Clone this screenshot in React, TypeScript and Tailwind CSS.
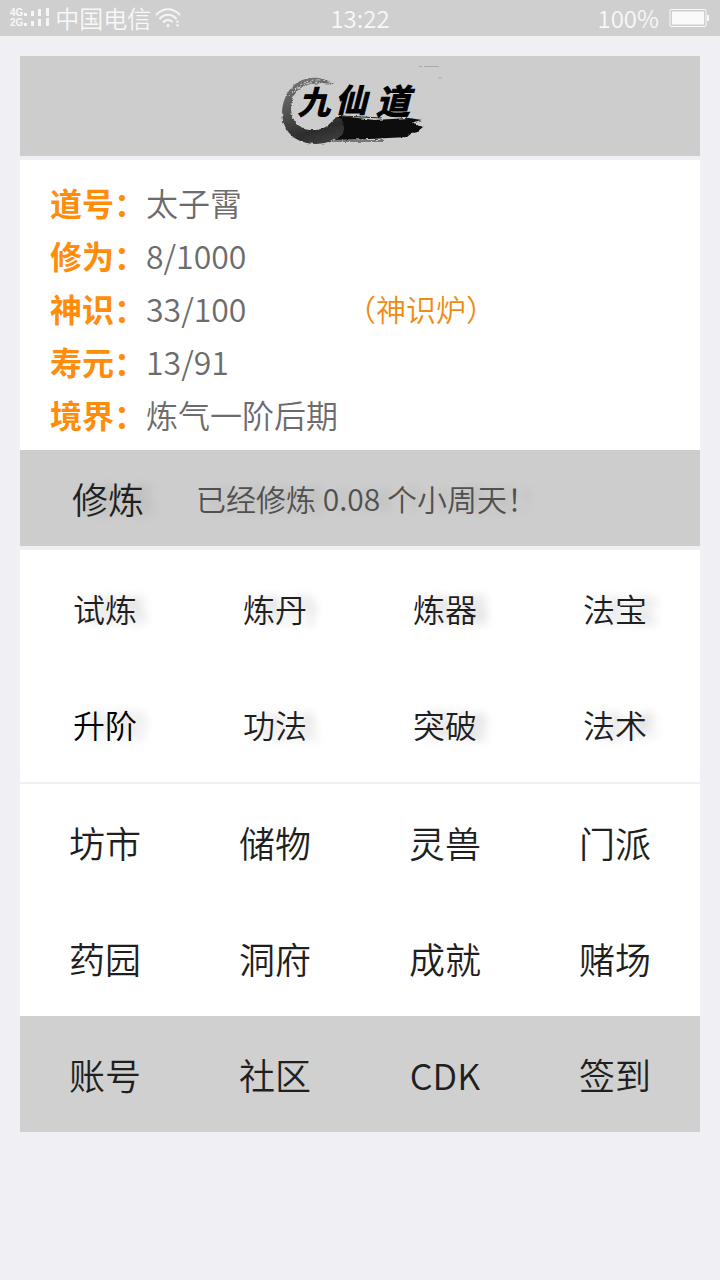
import React from 'react';

const stats = [
  { label: '道号', value: '太子霄' },
  { label: '修为', value: '8/1000' },
  { label: '神识', value: '33/100', link: '（神识炉）' },
  { label: '寿元', value: '13/91' },
  { label: '境界', value: '炼气一阶后期' },
];

const skills = ['试炼', '炼丹', '炼器', '法宝', '升阶', '功法', '突破', '法术'];
const places = ['坊市', '储物', '灵兽', '门派', '药园', '洞府', '成就', '赌场'];
const footer = ['账号', '社区', 'CDK', '签到'];

function Signal() {
  return (
    <svg width="28" height="20" viewBox="0 0 28 20" fill="#f6f6f6" aria-hidden="true">
      {[0, 10].map((y) => (
        <g key={y}>
          <rect x="1" y={y + 5} width="3" height="3" />
          <rect x="8" y={y + 3} width="3" height="5" />
          <rect x="15" y={y + 1} width="3" height="7" />
          <rect x="23" y={y} width="3" height="8" />
        </g>
      ))}
    </svg>
  );
}

function Wifi() {
  return (
    <svg width="26" height="20" viewBox="0 0 26 20" fill="none" stroke="#f6f6f6" strokeWidth="2" strokeLinecap="round" aria-hidden="true">
      <path d="M1.5 6.5C8 -0.5 18 -0.5 24.5 6.5" />
      <path d="M5 10.5C9.500 5.500 16.500 5.500 21 10.500" />
      <path d="M8.500 14C11 11.500 15 11.500 17 13.500" />
      <circle cx="13" cy="17.500" r="1.500" fill="#f6f6f6" stroke="none" />
      <path d="M20.500 14.500l2-2.500 2 2.500zM20.500 16.500l2 2.500 2-2.500z" fill="#f6f6f6" stroke="none" />
    </svg>
  );
}

function StatusBar() {
  return (
    <div className="grid h-9 grid-cols-3 items-center bg-[#cfcfcf] px-2.5 text-2xl leading-9 font-[350] text-[#f8f8f8]">
      <div className="flex items-center">
        <div className="font-['Liberation_Sans',sans-serif] text-[10px] leading-[10px] font-bold">
          <div>4G</div>
          <div>2G</div>
        </div>
        <Signal />
        <span className="mx-1">中国电信</span>
        <Wifi />
      </div>
      <div className="text-center">13:22</div>
      <div className="flex items-center justify-end gap-2.5">
        <span>100%</span>
        <svg width="41" height="18" viewBox="0 0 41 18" aria-hidden="true">
          <rect x="1" y="0.500" width="36" height="17" rx="1" fill="none" stroke="#f8f8f8" />
          <rect x="3" y="2.500" width="32" height="13" fill="#fafafa" />
          <rect x="38" y="6" width="2" height="6" fill="#f8f8f8" />
        </svg>
      </div>
    </div>
  );
}

function Logo() {
  return (
    <svg width="180" height="100" viewBox="0 0 180 100" role="img" aria-label="九仙道">
      <defs>
        <linearGradient id="ink" x1="0.3" y1="0" x2="0.6" y2="1">
          <stop offset="0" stopColor="#757575" />
          <stop offset="0.5" stopColor="#4c4c4c" />
          <stop offset="0.8" stopColor="#2c2c2c" />
          <stop offset="1" stopColor="#3c3c3c" />
        </linearGradient>
        <filter id="brush" x="-5%" y="-10%" width="110%" height="120%">
          <feTurbulence type="fractalNoise" baseFrequency="0.2 0.4" numOctaves="3" seed="4" />
          <feDisplacementMap in="SourceGraphic" scale="3" xChannelSelector="R" yChannelSelector="G" />
        </filter>
      </defs>
      <g filter="url(#brush)">
        <path fill="#090d09" d="M66 62L72 60L104 64L139 62L152 64L143 66L146 69L153 71L147 76L142 77L137 81L100 83L64 84L70 73Z" />
        <path fill="none" stroke="#222" strokeWidth="1" d="M72 60L112 62M62 85L113 85" />
        <path fill="url(#ink)" d="M64 28C52 19 32 19 21 32C9 47 9 68 22 80C34 90 54 90 64 83C70 82 74 79 74 72C74 65 71 61 66 61C61 66 57 73 46 74C31 75 21 66 21 52C21 40 28 30 41 28C50 27 57 27 64 28Z" />
        <path fill="none" stroke="#cdcdcd" strokeWidth="1" strokeDasharray="5 2 2 3" d="M62 27C46 20 29 25 19 40M54 28C42 24 31 28 22 38" />
      </g>
      <g fill="#000" stroke="#000" strokeWidth="1" fontWeight="700" fontStyle="italic" fontFamily='"Noto Sans CJK SC", sans-serif'>
        <text x="28" y="58" fontSize="32">九</text>
        <text x="65" y="56" fontSize="32">仙</text>
        <text x="106" y="58" fontSize="34">道</text>
      </g>
      <path stroke="#aaa" strokeWidth="1" d="M149 10.500h3M154 10.500h15M168 22h4" />
    </svg>
  );
}

function App() {
  return (
    <div className="min-h-screen bg-[#efeff4] font-['Noto_Sans_CJK_SC',sans-serif] font-[350] text-[#1f1f1f]">
      <StatusBar />
      <main className="px-5 py-5">
        <header className="mb-1 flex h-25 justify-center bg-[#cdcdcd]">
          <Logo />
        </header>

        {/* Character info */}
        <dl className="bg-white px-[30px] pt-4 pb-[9px] text-[32px] leading-[53px]">
          {stats.map((s) => (
            <div key={s.label} className="flex">
              <dt className="w-24 whitespace-nowrap font-bold text-[#ff8c0a]">{s.label}：</dt>
              <dd className="flex flex-1 text-[#6c6c6c]">
                <span className={s.link ? 'w-[200px]' : ''}>{s.value}</span>
                {s.link && (
                  <a href="#lu" className="text-[30px] text-[#ef8c14]">{s.link}</a>
                )}
              </dd>
            </div>
          ))}
        </dl>

        {/* Training progress */}
        <div className="mb-1 flex h-24 items-center gap-[52px] bg-[#cdcdcd] pl-[52px]">
          <button className="text-4xl text-shadow-[12px_0_10px_rgb(0_0_0/0.12)]">修炼</button>
          <p className="text-[30px] text-[#505050] text-shadow-[12px_0_10px_rgb(0_0_0/0.1)]">已经修炼 0.08 个小周天！</p>
        </div>

        <nav className="mb-0.5 grid grid-cols-4 bg-white">
          {skills.map((name) => (
            <button
              key={name}
              className={`h-29 text-[32px] text-shadow-[12px_0_10px_rgb(0_0_0/0.2)] ${name === '升阶' ? 'text-black' : ''}`}
            >
              {name}
            </button>
          ))}
        </nav>

        <nav className="grid grid-cols-4 bg-white">
          {places.map((name) => (
            <button key={name} className="h-29 text-4xl">{name}</button>
          ))}
        </nav>

        <footer className="grid grid-cols-4 bg-[#d0d0d0]">
          {footer.map((name) => (
            <button key={name} className="h-29 text-4xl">{name}</button>
          ))}
        </footer>
      </main>
    </div>
  );
}

export default App;
